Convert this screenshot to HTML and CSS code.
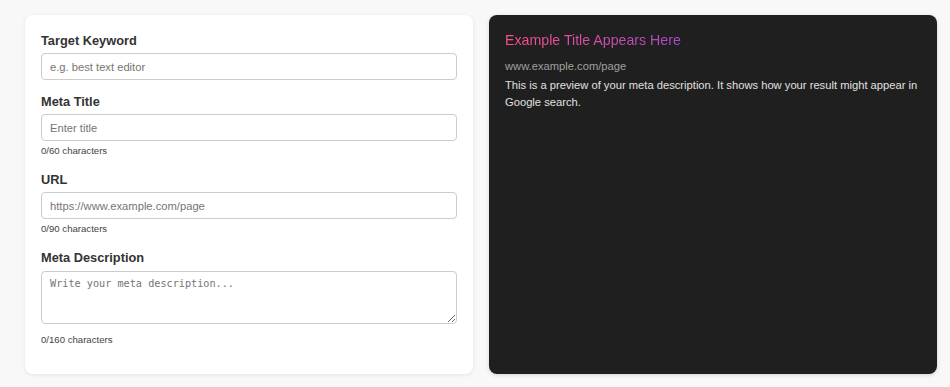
FILE: index.html
```html
<!DOCTYPE html>
<html lang="en">
<head>
  <meta charset="UTF-8">
  <meta name="viewport" content="width=device-width, initial-scale=1.0">
  <title>Meta Preview</title>
  <link rel="stylesheet" href="styles.css">
</head>
<body>
  <div class="layout">
    <div class="card form-card">
      <div class="form-group">
        <label for="keyword">Target Keyword</label>
        <input type="text" id="keyword" placeholder="e.g. best text editor">
      </div>
      <div class="form-group">
        <label for="title">Meta Title</label>
        <input type="text" id="title" placeholder="Enter title">
        <div class="char-count">0/60 characters</div>
      </div>
      <div class="form-group">
        <label for="url">URL</label>
        <input type="text" id="url" placeholder="https://www.example.com/page">
        <div class="char-count">0/90 characters</div>
      </div>
      <div class="form-group">
        <label for="desc">Meta Description</label>
        <textarea id="desc" placeholder="Write your meta description..."></textarea>
        <div class="char-count">0/160 characters</div>
      </div>
    </div>
    <div class="card preview-card">
      <div class="preview-title">Example Title Appears Here</div>
      <div class="preview-url">www.example.com/page</div>
      <div class="preview-desc">This is a preview of your meta description. It shows how your result might appear in Google search.</div>
    </div>
  </div>
</body>
</html>
```

FILE: styles.css
```css
html, body {
  margin: 0;
  padding: 0;
}
body {
  background: #f8f8f8;
  font-family: "Liberation Sans", Arial, sans-serif;
  color: #333;
  line-height: 1.5;
}
.layout {
  display: grid;
  grid-template-columns: 448px 448px;
  gap: 16px;
  padding: 15px 13px 13px 25px;
}
.card {
  border-radius: 8px;
  padding: 16px;
  box-shadow: 0 1px 4px rgba(0, 0, 0, 0.08);
}
.form-card {
  background: #fff;
  padding-bottom: 16px;
}
.form-group {
  margin-bottom: 12px;
}
.form-group label {
  display: block;
  font-size: 12.8px;
  font-weight: 700;
  color: #333;
  margin-bottom: 3px;
}
.form-group input,
.form-group textarea {
  display: block;
  box-sizing: border-box;
  width: 100%;
  border: 1px solid #ccc;
  border-radius: 4px;
  background: #fff;
  color: #333;
  margin: 0;
}
.form-group input {
  height: 27px;
  padding: 6px 8px;
  font-family: "Liberation Sans", Arial, sans-serif;
  font-size: 11.2px;
}
.form-group textarea {
  height: 53px;
  padding: 6px 8px;
  font-family: "DejaVu Sans Mono", monospace;
  font-size: 10.2px;
  margin-bottom: 9px;
}
.form-group input::placeholder,
.form-group textarea::placeholder {
  color: #757575;
}
.char-count {
  font-size: 9.6px;
  line-height: 1.45;
  color: #444;
  margin-top: 3px;
}
.preview-card {
  background: #1f1f1f;
  box-shadow: 0 1px 4px rgba(0, 0, 0, 0.15);
}
.preview-title {
  width: fit-content;
  font-size: 14.2px;
  line-height: 18px;
  margin-bottom: 9px;
  background: linear-gradient(90deg, #ff4f8b, #a94bc9);
  -webkit-background-clip: text;
  background-clip: text;
  color: transparent;
}
.preview-url {
  font-size: 11.2px;
  color: #a0a0a0;
  margin-bottom: 2px;
}
.preview-desc {
  font-size: 11.2px;
  line-height: 1.55;
  color: #e0e0e0;
}
```
